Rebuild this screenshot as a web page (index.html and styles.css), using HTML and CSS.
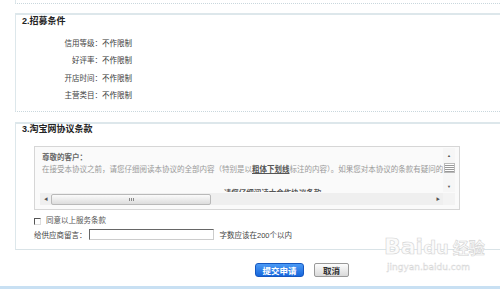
FILE: index.html
```html
<!DOCTYPE html>
<html lang="zh-CN">
<head>
  <meta charset="UTF-8" />
  <meta name="viewport" content="width=device-width, initial-scale=1.0"/>
  <title>招募申请</title>
  <link rel="stylesheet" href="styles.css">
</head>
<body>
  <div class="page">
    <div class="sec sec-prev"></div>

    <div class="sec">
      <h3 class="sec-title">2.招募条件</h3>
      <div class="cond">
        <div class="cond-row"><span class="cond-label">信用等级：</span><span>不作限制</span></div>
        <div class="cond-row"><span class="cond-label">好评率：</span><span>不作限制</span></div>
        <div class="cond-row"><span class="cond-label">开店时间：</span><span>不作限制</span></div>
        <div class="cond-row"><span class="cond-label">主营类目：</span><span>不作限制</span></div>
      </div>
    </div>

    <div class="sec sec-last">
      <h3 class="sec-title">3.淘宝网协议条款</h3>
      <div class="terms">
        <div class="scroll">
          <div class="scroll-view">
            <p class="greet">尊敬的客户：</p>
            <p class="terms-text">在接受本协议之前，请您仔细阅读本协议的全部内容（特别是以<b>粗体下划线</b>标注的内容）。如果您对本协议的条款有疑问的</p>
            <p class="terms-head">请您仔细阅读本合作协议条款</p>
          </div>
          <div class="vbar">
            <span class="arr">&#9650;</span>
            <span class="vthumb"></span>
            <span class="arr">&#9660;</span>
          </div>
          <div class="hbar">
            <span class="arr">&#9664;</span>
            <span class="hthumb"><i></i></span>
            <span class="arr arr-r">&#9654;</span>
          </div>
          <div class="corner"></div>
        </div>
      </div>
      <label class="agree"><span class="chk"></span>同意以上服务条款</label>
      <div class="msg">
        <span>给供应商留言：</span>
        <input class="msg-input" type="text">
        <span class="msg-tip">字数应该在200个以内</span>
      </div>
    </div>

    <div class="actions">
      <button class="btn btn-submit">提交申请</button>
      <button class="btn btn-cancel">取消</button>
    </div>
  </div>
  <div class="footer-line"></div>

  <div class="watermark">
    <div class="wm-logo">Bai<span class="wm-du">du</span><span class="wm-cn">经验</span></div>
    <div class="wm-url">jingyan.baidu.com</div>
  </div>
</body>
</html>
```

FILE: styles.css
```css
body {
  margin: 0;
  width: 500px;
  height: 289px;
  overflow: hidden;
  background: #fff;
  font-family: "Liberation Sans", "Noto Sans CJK SC", sans-serif;
  font-size: 7.5px;
  color: #444;
  position: relative;
}
p, h3 {
  margin: 0;
}
.page {
  padding-left: 15px;
}
.sec {
  border-top: 2px solid #dde7eb;
  border-left: 1px solid #dde7eb;
  border-bottom: 1px dotted #c9d7dd;
  margin-top: 9px;
  padding-bottom: 7px;
}
.sec-prev {
  border-top: none;
  margin-top: 0;
  height: 3px;
  padding: 0;
}
.sec-title {
  font-size: 9px;
  line-height: 12px;
  font-weight: bold;
  color: #222;
  padding-left: 6px;
}
.cond {
  margin-top: 8px;
}
.cond-row {
  display: flex;
  line-height: 17.3px;
  color: #333;
}
.cond-label {
  width: 86px;
  text-align: right;
  color: #444;
}
.sec-last {
  margin-top: 10px;
  padding-bottom: 8px;
  border-bottom: 1px solid #d9e3e7;
}
.sec-last .sec-title {
  line-height: 11px;
}
.terms {
  margin: 11px 0 0 18px;
  width: 415px;
  height: 61px;
  border: 1px solid #d6d6d6;
  background: #fafafa;
  padding: 1px 4px 0 5px;
}
.scroll {
  display: grid;
  grid-template-columns: 1fr 12px;
  grid-template-rows: 44px 13px;
  height: 57px;
}
.scroll-view {
  overflow: hidden;
  padding: 4px 0 0 2px;
}
.scroll-view p {
  line-height: 12px;
  white-space: nowrap;
}
.greet {
  color: #666;
  font-weight: bold;
}
.terms-text {
  color: #999;
}
.terms-text b {
  color: #555;
  text-decoration: underline;
}
.terms-head {
  margin-top: 12px;
  text-align: center;
  color: #555;
  font-weight: bold;
  padding-left: 60px;
}
.vbar {
  display: flex;
  flex-direction: column;
  align-items: center;
  justify-content: space-between;
  padding: 5px 0 3px;
  background: #f6f6f6;
}
.arr {
  font-size: 4px;
  line-height: 5px;
  color: #555;
}
.vthumb {
  width: 9px;
  height: 8px;
  border: 1px solid #bbb;
  background: repeating-linear-gradient(#fff 0 1px, #999 1px 2px);
  margin-top: -6px;
}
.hbar {
  display: flex;
  align-items: center;
  background: #efefef;
  padding: 0 3px 0 4px;
  height: 12px;
  margin-top: 1px;
}
.hthumb {
  margin-left: 3px;
  width: 158px;
  height: 9px;
  border: 1px solid #b9b9b9;
  border-radius: 2px;
  background: linear-gradient(#fbfbfb, #dcdcdc);
  display: flex;
  align-items: center;
  justify-content: center;
}
.hthumb i {
  width: 5px;
  height: 3px;
  background: repeating-linear-gradient(90deg, #888 0 1px, transparent 1px 2px);
}
.arr-r {
  margin-left: auto;
}
.corner {
  background: #f3f3f3;
  margin-top: 1px;
}
.agree {
  display: flex;
  align-items: center;
  margin: 5px 0 0 18px;
  line-height: 12px;
  color: #555;
}
.chk {
  width: 5px;
  height: 5px;
  border-top: 1px solid #555;
  border-left: 1px solid #555;
  border-right: 1px solid #ddd;
  border-bottom: 1px solid #ddd;
  margin-right: 5px;
}
.msg {
  display: flex;
  align-items: center;
  margin: 1px 0 0 18px;
  height: 13px;
  color: #444;
}
.msg-input {
  width: 125px;
  height: 11px;
  box-sizing: border-box;
  margin: 0 0 0 2px;
  padding: 0;
  border-top: 1px solid #666;
  border-left: 1px solid #666;
  border-right: 1px solid #ccc;
  border-bottom: 1px solid #ccc;
}
.msg-tip {
  margin-left: 6px;
}
.actions {
  display: flex;
  gap: 10px;
  margin: 13px 0 0 240px;
}
.btn {
  height: 14px;
  padding: 0;
  font-family: "Noto Sans CJK SC", sans-serif;
  font-size: 8.5px;
  font-weight: bold;
  line-height: 12px;
  border-radius: 3px;
  cursor: pointer;
}
.btn-submit {
  width: 49px;
  color: #fff;
  border: 1px solid #1557c0;
  background: linear-gradient(#4b9af5, #1666dc);
}
.btn-cancel {
  width: 35px;
  color: #333;
  border: 1px solid #999;
  border-radius: 2px;
  background: linear-gradient(#fdfdfd, #d9d9d9);
}
.footer-line {
  position: absolute;
  left: 0;
  right: 0;
  bottom: 0;
  height: 3px;
  background: #c8e0f3;
}
.watermark {
  position: absolute;
  left: 384px;
  top: 234px;
  color: #fbfbfb;
  -webkit-text-stroke: 0.6px #d4d4d4;
  font-family: "DejaVu Sans", "Noto Sans CJK SC", sans-serif;
}
.wm-logo {
  font-size: 22px;
  font-weight: bold;
  line-height: 26px;
}
.wm-du {
  font-size: 18px;
}
.wm-cn {
  font-size: 16px;
  margin-left: 4px;
}
.wm-url {
  font-size: 9px;
  line-height: 11px;
  -webkit-text-stroke: 0.4px #d4d4d4;
  padding-left: 3px;
}
```
